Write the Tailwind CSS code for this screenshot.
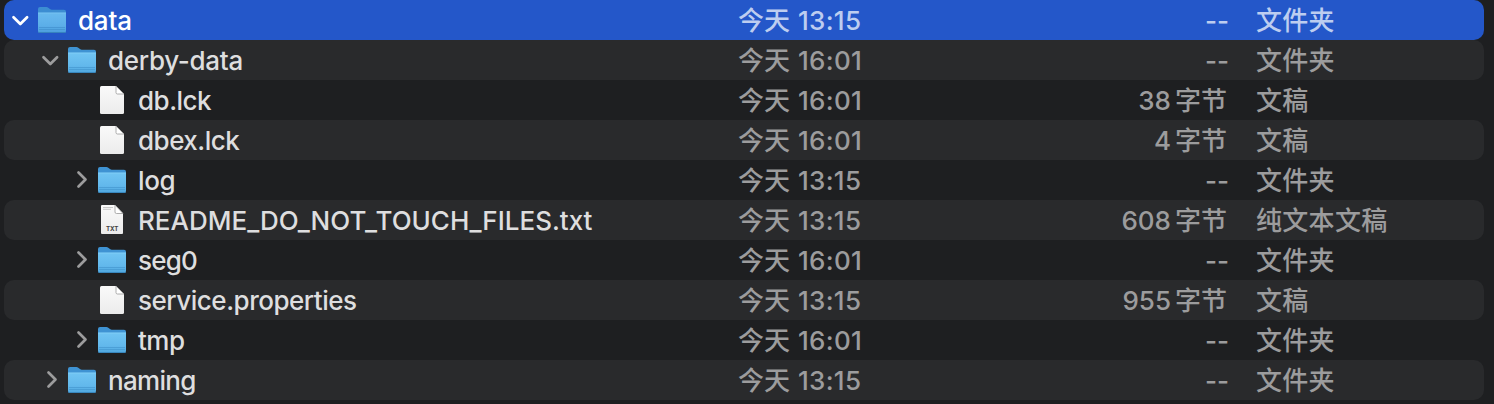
<!DOCTYPE html>
<html lang="zh-CN">
<head>
<meta charset="utf-8">
<title>data</title>
<script src="https://cdn.jsdelivr.net/npm/@tailwindcss/browser@4"></script>
</head>
<body class="h-[404px] overflow-hidden bg-[#1e1f21] font-['Inter','Noto_Sans_CJK_SC',sans-serif] text-[26px] font-[450] leading-[40px] text-[#9c9c9d]">
<svg class="absolute h-0 w-0">
  <defs>
    <linearGradient id="front" x1="0" y1="0" x2="0" y2="1"><stop offset="0" stop-color="#71c5f3"/><stop offset=".65" stop-color="#62b8ec"/><stop offset="1" stop-color="#4fa6de"/></linearGradient>
    <linearGradient id="paper" x1="0" y1="0" x2="0" y2="1"><stop offset="0" stop-color="#fafafa"/><stop offset="1" stop-color="#ececec"/></linearGradient>
    <symbol id="folder" viewBox="0 0 30 40">
      <path d="M1 9q0-2 2-2h6.500q1 0 1.800.7l1.700 1.400q.8.700 1.800.7H27q2 0 2 2V20H1Z" fill="#3f93d3"/>
      <path d="M1 12.700h28V31q0 2-2 2H3q-2 0-2-2Z" fill="url(#front)"/>
      <path d="M1 13h28" stroke="#87d2f8" stroke-width=".8"/>
      <path d="M2 27.500h26M2 29.500h26" stroke="#4598d0" stroke-width=".7"/>
      <path d="M1.500 32.500h27" stroke="#3988bf" stroke-width="1"/>
    </symbol>
    <symbol id="doc" viewBox="0 0 30 40">
      <path d="M4.500 6H19l8 8v18.500q0 1.500-1.500 1.500h-21Q3 34 3 32.500v-25Q3 6 4.500 6Z" fill="url(#paper)"/>
      <path d="M19 6v6.500q0 1.500 1.500 1.500H27Z" fill="#fff" stroke="#999" stroke-width=".8"/>
    </symbol>
    <symbol id="txt" viewBox="0 0 30 40">
      <path d="M5 5h13l8 8.500V33q0 1-1 1H5q-1 0-1-1V6q0-1 1-1Z" fill="url(#paper)"/>
      <path d="M6 7.500h10M6 9.300h8" stroke="#bbb" stroke-width=".8"/>
      <path d="M18 5v7q0 1.500 1.500 1.500H26Z" fill="#fff" stroke="#999" stroke-width=".8"/>
      <text x="15.200" y="31" text-anchor="middle" font-family="Inter" font-weight="700" font-size="6.200" fill="#444">TXT</text>
    </symbol>
    <symbol id="down" viewBox="0 0 20 40"><path d="M3.500 17.200 10.300 24l6.800-6.800" fill="none" stroke="currentColor" stroke-width="2.700" stroke-linecap="round" stroke-linejoin="round"/></symbol>
    <symbol id="right" viewBox="0 0 20 40"><path d="m8.500 12.500 7 7-7 7" fill="none" stroke="currentColor" stroke-width="2.700" stroke-linecap="round" stroke-linejoin="round"/></symbol>
  </defs>
</svg>
<main class="ml-1 w-[1480px] whitespace-nowrap">
  <div class="flex h-10 rounded-[10px] bg-[#2457c9] text-[#bdcdf0]"><div class="flex w-[734px] pl-[6px] text-white"><svg class="h-10 w-5"><use href="#down"/></svg><svg class="ml-[7px] mr-[11px] h-10 w-[30px] opacity-90"><use href="#folder"/></svg><span class="pt-px tracking-[-0.2px]">data</span></div><div class="w-[290px] pt-px">今天 <span class="ml-px tracking-[0.3px]">13:15</span></div><div class="w-[201px] pt-px text-right">--</div><div class="ml-[27px] pt-px tracking-[0.3px]">文件夹</div></div>
  <div class="flex h-10 rounded-[10px] bg-[#292a2c]"><div class="flex w-[734px] pl-[36px]"><svg class="h-10 w-5"><use href="#down"/></svg><svg class="ml-[7px] mr-[11px] h-10 w-[30px]"><use href="#folder"/></svg><span class="pt-px tracking-[-0.3px] text-[#dededf]">derby-data</span></div><div class="w-[290px] pt-px">今天 <span class="ml-px tracking-[0.3px]">16:01</span></div><div class="w-[201px] pt-px text-right">--</div><div class="ml-[27px] pt-px tracking-[0.3px]">文件夹</div></div>
  <div class="flex h-10"><div class="flex w-[734px] pl-[93px]"><svg class="mr-[11px] h-10 w-[30px]"><use href="#doc"/></svg><span class="pt-px tracking-[-0.5px] text-[#dededf]">db.lck</span></div><div class="w-[290px] pt-px">今天 <span class="ml-px tracking-[0.3px]">16:01</span></div><div class="w-[199px] pt-px text-right">38<span class="ml-1">字节</span></div><div class="ml-[29px] pt-px tracking-[0.3px]">文稿</div></div>
  <div class="flex h-10 rounded-[10px] bg-[#292a2c]"><div class="flex w-[734px] pl-[93px]"><svg class="mr-[11px] h-10 w-[30px]"><use href="#doc"/></svg><span class="pt-px tracking-[-0.5px] text-[#dededf]">dbex.lck</span></div><div class="w-[290px] pt-px">今天 <span class="ml-px tracking-[0.3px]">16:01</span></div><div class="w-[199px] pt-px text-right">4<span class="ml-1">字节</span></div><div class="ml-[29px] pt-px tracking-[0.3px]">文稿</div></div>
  <div class="flex h-10"><div class="flex w-[734px] pl-[66px]"><svg class="h-10 w-5"><use href="#right"/></svg><svg class="ml-[7px] mr-[11px] h-10 w-[30px]"><use href="#folder"/></svg><span class="pt-px tracking-[-0.4px] text-[#dededf]">log</span></div><div class="w-[290px] pt-px">今天 <span class="ml-px tracking-[0.3px]">13:15</span></div><div class="w-[201px] pt-px text-right">--</div><div class="ml-[27px] pt-px tracking-[0.3px]">文件夹</div></div>
  <div class="flex h-10 rounded-[10px] bg-[#292a2c]"><div class="flex w-[734px] pl-[93px]"><svg class="mr-[11px] h-10 w-[30px]"><use href="#txt"/></svg><span class="pt-px text-[#dededf]">README_DO_NOT_TOUCH_FILES.txt</span></div><div class="w-[290px] pt-px">今天 <span class="ml-px tracking-[0.3px]">13:15</span></div><div class="w-[199px] pt-px text-right">608<span class="ml-1">字节</span></div><div class="ml-[29px] pt-px tracking-[0.3px]">纯文本文稿</div></div>
  <div class="flex h-10"><div class="flex w-[734px] pl-[66px]"><svg class="h-10 w-5"><use href="#right"/></svg><svg class="ml-[7px] mr-[11px] h-10 w-[30px]"><use href="#folder"/></svg><span class="pt-px tracking-[-0.8px] text-[#dededf]">seg0</span></div><div class="w-[290px] pt-px">今天 <span class="ml-px tracking-[0.3px]">16:01</span></div><div class="w-[201px] pt-px text-right">--</div><div class="ml-[27px] pt-px tracking-[0.3px]">文件夹</div></div>
  <div class="flex h-10 rounded-[10px] bg-[#292a2c]"><div class="flex w-[734px] pl-[93px]"><svg class="mr-[11px] h-10 w-[30px]"><use href="#doc"/></svg><span class="pt-px tracking-[-0.48px] text-[#dededf]">service.properties</span></div><div class="w-[290px] pt-px">今天 <span class="ml-px tracking-[0.3px]">13:15</span></div><div class="w-[199px] pt-px text-right">955<span class="ml-1">字节</span></div><div class="ml-[29px] pt-px tracking-[0.3px]">文稿</div></div>
  <div class="flex h-10"><div class="flex w-[734px] pl-[66px]"><svg class="h-10 w-5"><use href="#right"/></svg><svg class="ml-[7px] mr-[11px] h-10 w-[30px]"><use href="#folder"/></svg><span class="pt-px tracking-[-0.5px] text-[#dededf]">tmp</span></div><div class="w-[290px] pt-px">今天 <span class="ml-px tracking-[0.3px]">16:01</span></div><div class="w-[201px] pt-px text-right">--</div><div class="ml-[27px] pt-px tracking-[0.3px]">文件夹</div></div>
  <div class="flex h-10 rounded-[10px] bg-[#292a2c]"><div class="flex w-[734px] pl-[36px]"><svg class="h-10 w-5"><use href="#right"/></svg><svg class="ml-[7px] mr-[11px] h-10 w-[30px]"><use href="#folder"/></svg><span class="pt-px tracking-[-0.7px] text-[#dededf]">naming</span></div><div class="w-[290px] pt-px">今天 <span class="ml-px tracking-[0.3px]">13:15</span></div><div class="w-[201px] pt-px text-right">--</div><div class="ml-[27px] pt-px tracking-[0.3px]">文件夹</div></div>
</main>
</body>
</html>
